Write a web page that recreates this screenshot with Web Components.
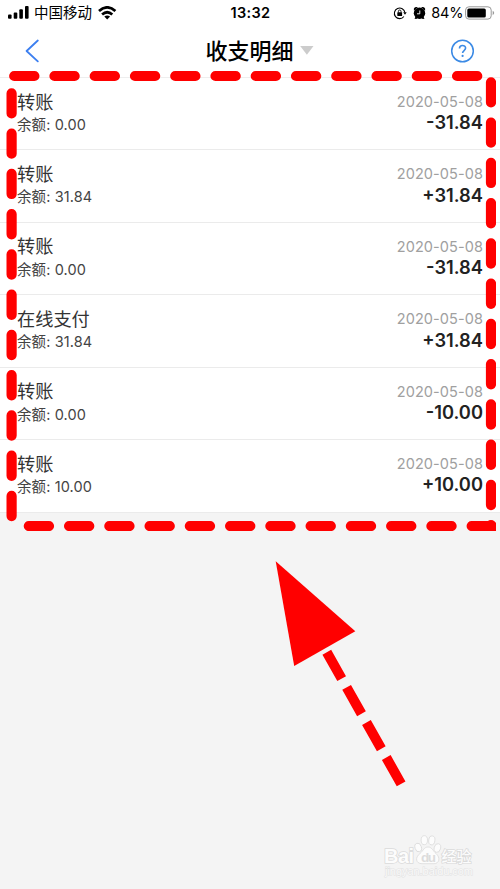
<!DOCTYPE html>
<html lang="zh-CN">
<head>
<meta charset="utf-8">
<title>收支明细</title>
<style>
html,body{margin:0;height:100%;overflow:hidden}
body{font-family:Inter,"Noto Sans CJK SC",sans-serif;background:#f4f4f4;color:#333}
</style>
</head>
<body>
<bill-page></bill-page>
<script>
const define=(name,html,setup)=>customElements.define(name,class extends HTMLElement{
  constructor(){super();this.attachShadow({mode:'open'}).innerHTML=html;}
  connectedCallback(){if(setup)setup(this,this.shadowRoot);}
});

define('status-bar',`<style>
:host{display:grid;grid-template-columns:1fr auto 1fr;height:25px;align-items:center;color:#000;box-sizing:border-box;padding:0 7px 0 8px;font-size:14.5px;line-height:25px}
.l,.r{display:flex;align-items:center;height:25px}
.r{justify-content:flex-end;margin-right:-2px}
.net{margin:0 6px 0 5px;font-size:14.5px}
.time{font-weight:600;letter-spacing:.35px;font-size:14.5px}
.pct{margin:0 1.500px 0 5px;font-size:14.5px;letter-spacing:-.1px}
svg{display:block;flex:none}
</style>
<div class="l">
<svg width="21" height="13" viewBox="0 0 21 13"><rect y="8.6" width="3.6" height="4.2" rx="1"/><rect x="5.7" y="6.5" width="3.6" height="6.3" rx="1"/><rect x="11.3" y="3.3" width="3.6" height="9.5" rx="1"/><rect x="17" y="0" width="3.6" height="12.8" rx="1"/></svg>
<span class="net">中国移动</span>
<svg width="19" height="14" viewBox="0 0 19 14"><g fill="none" stroke="#000" stroke-width="2.7"><path d="M1 5.1Q9.2-2.4 17.4 5.1"/><path d="M4.1 8.5Q9.2 4 14.3 8.500"/></g><path d="M9.2 13.5 6.3 10.6Q9.2 8.2 12.1 10.6Z"/></svg>
</div>
<span class="time">13:32</span>
<div class="r">
<svg width="14" height="14" viewBox="0 0 14 14"><path d="M11.9 6.500A5.3 5.3 0 1 0 10.900 10.500" fill="none" stroke="#000" stroke-width="1.1"/><path d="M10.2 6.200h3.5l-1.700 2.500z"/><rect x="4.3" y="6.2" width="4.8" height="3.700" rx=".5"/><path d="M5.400 6.500V5.300a1.300 1.300 0 0 1 2.600 0v1.200" fill="none" stroke="#000" stroke-width=".9"/></svg>
<svg style="margin-left:6px" width="13" height="14" viewBox="0 0 13 14"><circle cx="6.5" cy="7.2" r="5.700"/><path d="M.9 4.800V2.500Q2 .6 4.900 1.200zM12.100 4.800V2.500Q11 .6 8.100 1.200zM1.500 12.800l1.600-3 1.900 1.200-1.500 2.100zM11.500 12.800l-1.600-3-1.900 1.200 1.500 2.100z"/><path d="M6.800 4.500v3.300H4" fill="none" stroke="#fff" stroke-width=".9"/></svg>
<span class="pct">84%</span>
<svg width="30" height="14" viewBox="0 0 30 14"><rect x=".6" y=".8" width="25.6" height="12.3" rx="3.3" fill="none" stroke="#999"/><rect x="2.3" y="2.5" width="18.5" height="9" rx="1.6"/><path d="M27.7 4.8q3 2.2 0 4.4z" fill="#999"/></svg>
</div>`);

define('nav-bar',`<style>
:host{display:grid;grid-template-columns:1fr auto 1fr;align-items:center;height:51.9px;padding:0 24px 0 25px;border-bottom:1px solid #eee;color:#000}
.title{display:flex;align-items:center;gap:6px;font-size:22px;font-weight:500;line-height:32px;margin-left:18px}
.help{justify-self:end}
svg{display:block}
</style>
<svg width="14" height="24" viewBox="0 0 14 24"><path d="M12.8 1.5 1.6 12l11.2 10.3" fill="none" stroke="#3c7ff0" stroke-width="1.8" stroke-linecap="round" stroke-linejoin="round"/></svg>
<div class="title"><slot></slot><svg width="14" height="9" viewBox="0 0 14 9"><path d="M.2 0h13.3L6.9 8.8z" fill="#ccc"/></svg></div>
<svg class="help" width="26" height="24" viewBox="0 0 26 24"><g fill="none" stroke="#3b8ae5" stroke-width="1.5"><circle cx="12.5" cy="12" r="10.8"/><path d="M9.500 9.4c0-3.900 6.100-3.700 6.100-.3 0 2.400-3 2.500-3 4.900" stroke-width="1.6"/></g><circle cx="12.600" cy="16.900" r="1.1" fill="#3b8ae5"/></svg>`);

define('bill-row',`<style>
:host{display:flex;justify-content:space-between;box-sizing:border-box;height:72.46px;padding:10px 17px 0;border-bottom:1px solid #ebebeb;background:#fff}
.name{font-size:18.2px;line-height:28px;color:#333;margin-top:-.4px}
.balance{font-size:14.5px;line-height:20px;color:#444;letter-spacing:.1px;margin-top:-.600px}
.side{display:flex;flex-direction:column;align-items:flex-end}
.date{font-size:14.5px;line-height:28px;color:#a0a0a0;letter-spacing:.1px;margin-right:-.1px}
.amount{font-size:18.3px;line-height:20px;font-weight:600;color:#222;margin-top:-3.700px}
</style>
<div><div class="name"><slot></slot></div><div class="balance"></div></div>
<div class="side"><div class="date"></div><div class="amount"></div></div>`,(el,root)=>{
  root.querySelector('.balance').textContent='余额: '+el.getAttribute('balance');
  root.querySelector('.date').textContent=el.getAttribute('date');
  root.querySelector('.amount').textContent=el.getAttribute('amount');
});

define('dash-marks',`<style>:host{position:absolute;inset:0;pointer-events:none}svg{display:block}</style>
<svg width="500" height="889" viewBox="0 0 500 889"><defs><clipPath id="edge"><path d="M0 60H496V531H0z"/></clipPath></defs>
<g clip-path="url(#edge)" fill="none" stroke="#f00" stroke-width="10.2" stroke-linecap="round" stroke-dasharray="20.2 20.06"><path d="M14.2 76H478"/><path d="M11.6 93.3V517"/><path d="M491 82.3V540"/><path d="M28.8 526H510"/></g>
<path d="M275.7 561.3 355.3 631.2 294.2 666z" fill="#f00"/>
<path d="M326.8 652.3 401.2 784" fill="none" stroke="#f00" stroke-width="10" stroke-dasharray="30.2 10.1"/></svg>`);

define('page-watermark',`<style>:host{position:absolute;left:383px;top:832px;width:95px;height:48px}svg{display:block}text{font-family:"Liberation Sans","Noto Sans CJK SC",sans-serif}</style>
<svg width="95" height="48" viewBox="0 0 95 48"><g fill="#fcfcfc" stroke="#dadada" stroke-width=".8">
<g stroke-width="1.5" paint-order="stroke"><text x="1" y="31" font-size="20" font-weight="700" textLength="30">Bai</text>
<text x="58.5" y="30" font-size="15" font-weight="500" textLength="30">经验</text></g>
<ellipse cx="35.2" cy="15.5" rx="3.2" ry="4.4" transform="rotate(-18 35.2 15.5)"/><ellipse cx="41.3" cy="8.2" rx="3.2" ry="4.5"/><ellipse cx="48.8" cy="8.4" rx="3.1" ry="4.5" transform="rotate(8 48.8 8.4)"/><ellipse cx="54.4" cy="16" rx="3.2" ry="4.4" transform="rotate(15 54.4 16)"/>
<path d="M45 15c4 0 5 4 8 6.500 5 4.500 3 10.200-2 10.200H39c-6 0-7.500-6-2-10.200C40.500 18.500 41 15 45 15z"/></g>
<text x="38" y="29.500" font-size="13.500" font-weight="700" fill="#dcdcdc" textLength="15">du</text>
<text x="2" y="43" font-size="11" fill="#f9f9f9" stroke="#e2e2e2" stroke-width="1" paint-order="stroke" textLength="88">jingyan.baidu.com</text></svg>`);

define('bill-page',`<style>
:host{display:block;position:relative;width:500px;height:889px;overflow:hidden;background:#f4f4f4}
header{background:#fff}
</style>
<header><status-bar></status-bar><nav-bar>收支明细</nav-bar></header>
<main>
<bill-row balance="0.00" date="2020-05-08" amount="-31.84">转账</bill-row>
<bill-row balance="31.84" date="2020-05-08" amount="+31.84">转账</bill-row>
<bill-row balance="0.00" date="2020-05-08" amount="-31.84">转账</bill-row>
<bill-row balance="31.84" date="2020-05-08" amount="+31.84">在线支付</bill-row>
<bill-row balance="0.00" date="2020-05-08" amount="-10.00">转账</bill-row>
<bill-row balance="10.00" date="2020-05-08" amount="+10.00">转账</bill-row>
</main>
<dash-marks></dash-marks><page-watermark></page-watermark>`);
</script>
</body>
</html>
